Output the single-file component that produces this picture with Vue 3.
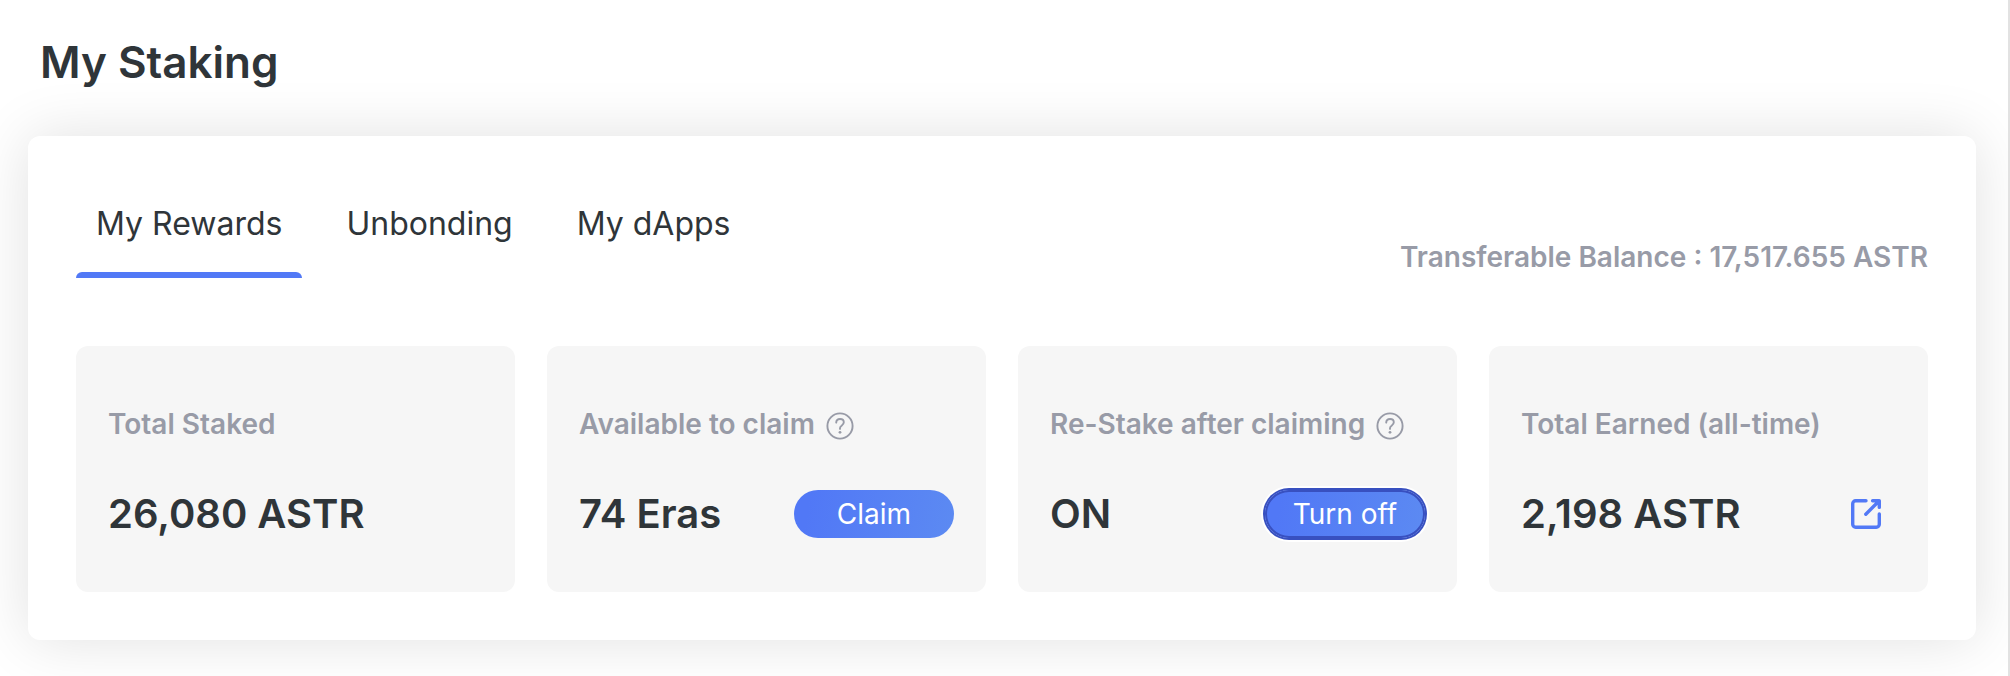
<script setup>
import { ref } from 'vue'

const tabs = ['My Rewards', 'Unbonding', 'My dApps']
const activeTab = ref('My Rewards')

const cards = [
  { label: 'Total Staked', value: '26,080 ASTR' },
  { label: 'Available to claim', value: '74 Eras', help: true, action: 'Claim' },
  { label: 'Re-Stake after claiming', value: 'ON', help: true, action: 'Turn off', focused: true },
  { label: 'Total Earned (all-time)', value: '2,198 ASTR', link: true },
]
</script>

<template>
  <main class="page">
    <h1 class="title">My Staking</h1>
    <section class="panel">
      <div class="toolbar">
        <nav class="tabs">
          <button
            v-for="tab in tabs"
            :key="tab"
            type="button"
            class="tab"
            :class="{ active: tab === activeTab }"
            @click="activeTab = tab"
          >{{ tab }}</button>
        </nav>
        <div class="balance">Transferable Balance : 17,517.655 ASTR</div>
      </div>
      <div class="cards">
        <article v-for="card in cards" :key="card.label" class="card">
          <div class="label">
            {{ card.label }}
            <svg v-if="card.help" class="help" viewBox="0 0 28 28" aria-hidden="true">
              <circle cx="14" cy="14" r="12.6" />
              <path d="M10.2 10.6C10.3 8.3 11.8 7 14 7s3.8 1.3 3.8 3.3c0 1.7-.9 2.5-2.2 3.4-1.2.8-1.6 1.4-1.6 2.6v.6" />
              <circle class="dot" cx="14" cy="20.3" r="1.4" />
            </svg>
          </div>
          <div class="row">
            <span class="value">{{ card.value }}</span>
            <button
              v-if="card.action"
              type="button"
              class="action"
              :class="{ focused: card.focused }"
            >{{ card.action }}</button>
            <a v-if="card.link" href="#" class="external" aria-label="Open earnings history">
              <svg viewBox="0 0 32 32" aria-hidden="true">
                <path d="M16 2.7H5.7a3 3 0 0 0-3 3v20.6a3 3 0 0 0 3 3h20.6a3 3 0 0 0 3-3V16" />
                <path d="M22.6 2.7h6.7v6.7M28.8 3.2 15.8 16.2" />
                <path class="tip" d="M23.5 2.7h5.8v5.8z" />
              </svg>
            </a>
          </div>
        </article>
      </div>
    </section>
  </main>
</template>

<style>
body {
  margin: 0;
  background: #fff;
}
</style>

<style scoped>
.page {
  box-sizing: border-box;
  min-height: 100vh;
  padding: 34px 32px 36px 28px;
  border-right: 2px solid #e2e2e2;
  overflow: hidden;
  font-family: Inter, "Liberation Sans", sans-serif;
  color: #2f3539;
}
.title {
  margin: 0 12px 46px;
  font-size: 44px;
  line-height: 56px;
  font-weight: 600;
}
.panel {
  padding: 48px;
  border-radius: 12px;
  background: #fff;
  box-shadow: 0 0 60px rgba(0, 0, 0, 0.12);
}
.toolbar {
  display: flex;
  align-items: flex-end;
  justify-content: space-between;
  margin-bottom: 68px;
}
.tabs {
  display: flex;
  gap: 24px;
}
.tab {
  position: relative;
  padding: 16px 20px 30px;
  border: 0;
  background: none;
  font: inherit;
  font-size: 32px;
  line-height: 48px;
  color: inherit;
  cursor: pointer;
}
.tab.active::after {
  content: "";
  position: absolute;
  left: 0;
  right: 0;
  bottom: 0;
  height: 6px;
  border-radius: 6px 6px 0 0;
  background: #5279f6;
}
.balance {
  font-size: 28px;
  line-height: 42px;
  font-weight: 600;
  color: #989ba7;
}
.cards {
  display: grid;
  grid-template-columns: repeat(4, minmax(0, 1fr));
  gap: 32px;
}
.card {
  padding: 60px 32px 54px;
  border-radius: 12px;
  background: #f6f6f6;
}
.label {
  margin-bottom: 48px;
  height: 36px;
  font-size: 28px;
  line-height: 36px;
  font-weight: 600;
  white-space: nowrap;
  color: #989ba7;
}
.help {
  width: 28px;
  height: 28px;
  margin-left: 4px;
  vertical-align: middle;
  fill: none;
  stroke: #989ba7;
  stroke-width: 1.9;
  stroke-linecap: round;
}
.help .dot {
  fill: #989ba7;
  stroke: none;
}
.row {
  display: flex;
  align-items: center;
  justify-content: space-between;
  height: 48px;
}
.value {
  font-size: 40px;
  line-height: 50px;
  font-weight: 600;
  white-space: nowrap;
}
.action {
  width: 160px;
  height: 48px;
  padding: 0;
  border: 0;
  border-radius: 24px;
  background: linear-gradient(100deg, #5178f6 10%, #5c8af2 100%);
  font: inherit;
  font-size: 28px;
  line-height: 48px;
  color: #fff;
  cursor: pointer;
}
.action.focused {
  box-shadow: inset 0 0 0 2px #3850c0, 0 0 0 2px #3850c0, 0 0 0 4px #fff;
}
.external {
  display: flex;
  padding: 8px 14px;
}
.external svg {
  width: 32px;
  height: 32px;
  fill: none;
  stroke: #5279f6;
  stroke-width: 3.4;
  stroke-linecap: round;
  stroke-linejoin: round;
}
.external .tip {
  fill: #5279f6;
  stroke: none;
}
</style>
